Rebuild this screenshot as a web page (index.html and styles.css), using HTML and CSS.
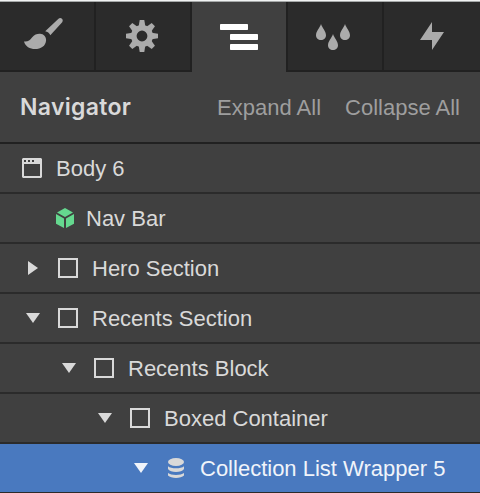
FILE: index.html
```html
<!DOCTYPE html>
<html lang="en">
<head>
<meta charset="utf-8">
<title>Navigator</title>
<link rel="stylesheet" href="styles.css">
</head>
<body>
<nav class="tabs">
  <div class="tab"><svg class="brush" width="40" height="32" viewBox="0 0 40 32"><path d="M21.2 13.2 34.5.8C36.8-1.2 40 1.6 38.2 4.2L26.3 17.2C25.4 15 23.5 13.6 21.2 13.2Z"/><path d="M0 23.4C4 23.8 5.8 22.3 8 19.5C10.4 16.6 13 15.7 16 15.8C19.8 16 22.2 18.8 22.1 22.2C21.8 28.1 16.8 31 11 31C6 31 1.2 28.4 0 23.4Z"/></svg></div>
  <div class="tab"><svg class="gear" width="32" height="32" viewBox="-16 -16 32 32"><defs><path id="tooth" d="M-3.6-8-2.3-16H2.3L3.6-8Z"/></defs><circle r="8.2" fill="none" stroke="#ababab" stroke-width="5.6"/><use href="#tooth"/><use href="#tooth" transform="rotate(45)"/><use href="#tooth" transform="rotate(90)"/><use href="#tooth" transform="rotate(135)"/><use href="#tooth" transform="rotate(180)"/><use href="#tooth" transform="rotate(225)"/><use href="#tooth" transform="rotate(270)"/><use href="#tooth" transform="rotate(315)"/></svg></div>
  <div class="tab active"><svg class="levels" width="38" height="26" viewBox="0 0 38 26"><rect width="28" height="6" rx=".7"/><rect x="10" y="10" width="28" height="6" rx=".7"/><rect x="10" y="20" width="28" height="6" rx=".7"/></svg></div>
  <div class="tab"><svg class="drops" width="34" height="26" viewBox="0 0 34 26"><defs><path id="drop" d="M5 0C6.2 3.8 10 7.2 10 11.2C10 14.2 7.8 16 5 16S0 14.2 0 11.2C0 7.2 3.8 3.8 5 0Z"/></defs><use href="#drop"/><use href="#drop" x="12" y="10"/><use href="#drop" x="24"/></svg></div>
  <div class="tab"><svg class="bolt" width="24" height="28" viewBox="0 0 24 28"><path d="M12 0V10H24L12 28V18H0Z"/></svg></div>
</nav>
<header class="heading"><h1>Navigator</h1><span class="expand">Expand All</span><span class="collapse">Collapse All</span></header>
<main class="tree">
  <div class="row body-row"><svg class="icon" width="20" height="20" viewBox="0 0 20 20"><path fill-rule="evenodd" d="M1 0H19L20 1V19L19 20H1L0 19V1ZM2 6V18H18V6ZM2 2V4H4V2ZM6 2V4H8V2ZM10 2V4H12V2Z"/></svg><span>Body 6</span></div>
  <div class="row nav-row"><svg class="icon cube" width="18" height="20" viewBox="0 0 18 20"><path d="M9 0 17 4.5 9 9 1 4.5ZM0 6 8 10.5V20L0 15.8ZM18 6V15.8L10 20V10.5Z"/></svg><span>Nav Bar</span></div>
  <div class="row"><svg class="arrow" width="14" height="14" viewBox="0 0 14 14"><path d="M2 0 12 7 2 14Z"/></svg><i class="box"></i><span>Hero Section</span></div>
  <div class="row"><svg class="arrow" width="14" height="14" viewBox="0 0 14 14"><path d="M0 2H14L7 12Z"/></svg><i class="box"></i><span>Recents Section</span></div>
  <div class="row level-1"><svg class="arrow" width="14" height="14" viewBox="0 0 14 14"><path d="M0 2H14L7 12Z"/></svg><i class="box"></i><span>Recents Block</span></div>
  <div class="row level-2"><svg class="arrow" width="14" height="14" viewBox="0 0 14 14"><path d="M0 2H14L7 12Z"/></svg><i class="box"></i><span>Boxed Container</span></div>
  <div class="row level-3 selected"><svg class="arrow" width="14" height="14" viewBox="0 0 14 14"><path d="M0 2H14L7 12Z"/></svg><svg class="icon data" width="16" height="20" viewBox="0 0 16 20"><ellipse cx="8" cy="4" rx="8" ry="4"/><path d="M0 8.2C3 11 13 11 16 8.2V11C14 15 2 15 0 11ZM0 15C3 17.6 13 17.6 16 15V17.5C13 20.8 3 20.8 0 17.5Z"/></svg><span>Collection List Wrapper 5</span></div>
</main>
</body>
</html>
```
FILE: styles.css
```css
* { box-sizing: border-box; }
body {
  margin: 0;
  height: 493px;
  overflow: hidden;
  background: #404040;
  color: #d9d9d9;
  font: 22px/26px "Liberation Sans", Arial, sans-serif;
}
svg { display: block; flex: none; fill: currentColor; }
.tabs {
  display: grid;
  grid-template-columns: 96px 96px 94px 98px 96px;
  height: 72px;
  border-top: 1px solid #f1f3f3;
  box-shadow: inset 0 1px #a6a9a9;
  color: #ababab;
  padding-top: 1px;
}
.tab {
  background: #2b2b2b;
  border-right: 2px solid #212121;
  border-bottom: 2px solid #212121;
}
.tab.active { background: #404040; color: #fff; border: 0; }
.tab.active + .tab { border-left: 2px solid #212121; }
.tab:last-child { border-right: 0; }
.brush { margin: 16px 0 0 24px; }
.gear { margin: 18px 0 0 30px; }
.levels { margin: 22px 0 0 28px; }
.drops { margin: 22px 0 0 28px; }
.bolt { margin: 20px 0 0 36px; }
.heading {
  display: flex;
  align-items: center;
  height: 72px;
  padding: 0 20px;
  border-bottom: 2px solid #212121;
}
h1 {
  margin: 0;
  font: 600 23px/28px Inter, sans-serif;
  letter-spacing: .3px;
}
.expand, .collapse { color: #9e9e9e; padding-top: 2px; }
.expand { margin-left: auto; }
.collapse { margin-left: 24px; }
.row {
  display: flex;
  align-items: center;
  height: 50px;
  padding-left: 26px;
  border-bottom: 2px solid #2b2b2b;
  white-space: nowrap;
}
.row span { padding-top: 1px; }
.body-row { padding-left: 22px; }
.body-row span { margin-left: 14px; }
.nav-row { padding-left: 56px; }
.nav-row span { margin-left: 12px; }
.cube { color: #65d88f; }
.arrow { margin-right: 18px; }
.box { width: 20px; height: 20px; margin-right: 14px; border: 2px solid #d9d9d9; flex: none; }
.level-1 { padding-left: 62px; }
.level-2 { padding-left: 98px; }
.level-3 { padding-left: 134px; }
.selected { background: #4979bf; color: #f0f4fa; }
.data { color: #d9d9d9; margin: 0 16px 0 2px; }
```
